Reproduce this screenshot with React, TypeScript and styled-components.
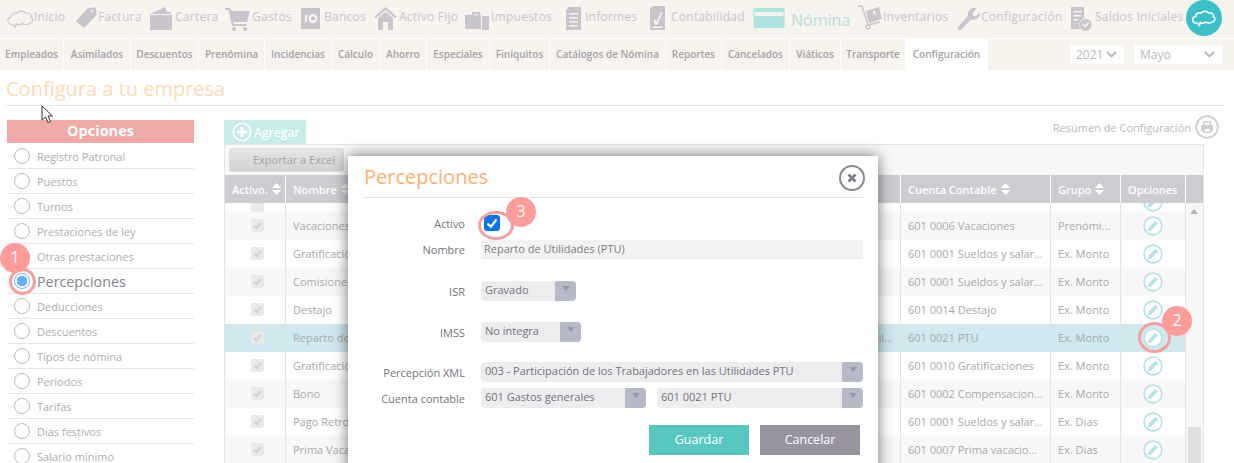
import React from "react";
import styled, { createGlobalStyle } from "styled-components";

const GlobalStyle = createGlobalStyle`
  html, body { margin: 0; padding: 0; background: #fff; }
  body { font-family: "Open Sans", "Liberation Sans", sans-serif; }
  * { box-sizing: border-box; }
`;

const Page = styled.div`
  position: relative;
  width: 1234px;
  height: 463px;
  overflow: hidden;
  background: #fff;
`;

/* top menu */
const TopBar = styled.header`
  display: flex;
  height: 38px;
  padding-left: 7px;
  background: #f7f3ed;
`;
const NavItem = styled.div<{ $w: number; $active?: boolean }>`
  display: flex;
  align-items: center;
  flex: 0 0 ${(p) => p.$w}px;
  height: 38px;
  white-space: nowrap;
  color: ${(p) => (p.$active ? "#aee4df" : "#c8c5cc")};
  font-size: ${(p) => (p.$active ? "16px" : "12px")};
  padding-top: ${(p) => (p.$active ? "2px" : "0")};
  letter-spacing: ${(p) => (p.$active ? "0" : "0.25px")};
  span { margin-top: ${(p) => (p.$active ? "0" : "-6px")}; }
`;
const NavIcon = styled.svg<{ $slot: number }>`
  flex: 0 0 auto;
  width: ${(p) => p.$slot}px;
  height: 26px;
  fill: currentColor;
  margin-top: -2px;
`;
const CloudButton = styled.div`
  position: absolute;
  left: 1186px;
  top: 0;
  width: 36px;
  height: 36px;
  border-radius: 50%;
  background: #3bc0c7;
  display: flex;
  align-items: center;
  justify-content: center;
`;

/* second level tabs */
const SubBar = styled.nav`
  display: flex;
  align-items: stretch;
  height: 31px;
  margin-top: 1px;
  background: #f7f3ed;
`;
const Tab = styled.div<{ $w: number; $current?: boolean }>`
  flex: 0 0 ${(p) => p.$w}px;
  display: flex;
  align-items: center;
  justify-content: center;
  padding-bottom: 1px;
  font-size: 10px;
  font-weight: 600;
  white-space: nowrap;
  color: #a3a2ab;
  border-right: 1px solid #fff;
  background: ${(p) => (p.$current ? "#fff" : "transparent")};
`;
const PeriodBox = styled.div<{ $w: number; $left: number }>`
  flex: 0 0 ${(p) => p.$w}px;
  margin: 6px 0 6px ${(p) => p.$left}px;
  background: #fff;
  display: flex;
  align-items: center;
  justify-content: space-between;
  padding: 0 7px 0 6px;
  font-size: 12px;
  color: #b9b9bd;
`;

/* title */
const TitleRow = styled.div`
  height: 36px;
  margin: 0 10px 0 6px;
  border-bottom: 1px solid #e4e4e4;
  font-size: 20px;
  line-height: 38px;
  color: #fddbb3;
`;

const Content = styled.div`
  display: flex;
  padding: 14px 0 0 7px;
`;

/* left options */
const Side = styled.aside`
  flex: 0 0 187px;
  margin-right: 30px;
`;
const SideHead = styled.div`
  height: 24px;
  background: #efa9a6;
  border-bottom: 1px solid #fff;
  color: #fff;
  font-size: 14.5px;
  font-weight: 700;
  line-height: 22px;
  text-align: center;
`;
const SideRow = styled.div<{ $selected?: boolean }>`
  display: flex;
  align-items: center;
  height: 25px;
  padding-left: 7px;
  border-bottom: 1px solid #e6e6e6;
  color: ${(p) => (p.$selected ? "#84848c" : "#adadb1")};
  font-size: ${(p) => (p.$selected ? "14.3px" : "11px")};
`;
const Radio = styled.span<{ $selected?: boolean }>`
  flex: 0 0 16px;
  width: 16px;
  height: 16px;
  margin-right: 7px;
  border-radius: 50%;
  border: 1px solid ${(p) => (p.$selected ? "#6fb0f5" : "#bcbcbc")};
  background: ${(p) => (p.$selected ? "radial-gradient(circle, #6aaef8 0 5px, #fff 5.5px)" : "#fff")};
`;

/* main table */
const Main = styled.section`
  flex: 0 0 995px;
`;
const MainTop = styled.div`
  display: flex;
  justify-content: space-between;
  height: 24px;
`;
const AddTab = styled.div`
  display: flex;
  align-items: center;
  gap: 2px;
  width: 82px;
  padding-left: 8px;
  background: #c8ecea;
  color: #fff;
  font-size: 12px;
  font-weight: 600;
`;
const SummaryLink = styled.div`
  display: flex;
  align-items: center;
  gap: 4px;
  height: 26px;
  margin-top: -6px;
  color: #b9b7bd;
  font-size: 11px;
`;
const Panel = styled.div`
  width: 980px;
  border: 1px solid #e4e4e4;
  border-top: 0;
  height: 320px;
  overflow: hidden;
`;
const Toolbar = styled.div`
  height: 31px;
  padding: 3px 4px;
  background: #f8f8f8;
  border-top: 1px solid #e4e4e4;
`;
const ExportButton = styled.div`
  width: 115px;
  height: 24px;
  border: 1px solid #dcdcdc;
  border-radius: 3px;
  background: linear-gradient(#e6e6e8, #d2d2d4);
  color: #a2a2a6;
  font-size: 11px;
  line-height: 22px;
  padding-left: 23px;
`;
const COLUMNS = "61px 340px 275px 150px 70px 65px";
const HeadRow = styled.div`
  display: grid;
  grid-template-columns: ${COLUMNS} 17px;
  height: 28px;
  background: #cdccd1;
  color: #fff;
  font-size: 11px;
  font-weight: 600;
`;
const HeadCell = styled.div`
  display: flex;
  align-items: center;
  gap: 4px;
  padding-left: 7px;
  border-right: 1px solid #fff;
  white-space: nowrap;
  &:last-child { border-right: 0; }
`;
const BodyWrap = styled.div`
  position: relative;
  padding-right: 17px;
`;
const Row = styled.div<{ $tone: "white" | "grey" | "picked"; $partial?: boolean }>`
  display: grid;
  grid-template-columns: ${COLUMNS};
  height: ${(p) => (p.$partial ? "9px" : "28px")};
  overflow: hidden;
  background: ${(p) =>
    p.$tone === "picked" ? "#cfe9ef" : p.$tone === "grey" ? "#f8f8f8" : "#fff"};
  color: #a8a8aa;
  font-size: 11px;
`;
const Cell = styled.div<{ $center?: boolean; $bottom?: boolean }>`
  display: flex;
  align-items: ${(p) => (p.$bottom ? "flex-end" : "center")};
  justify-content: ${(p) => (p.$center ? "center" : "flex-start")};
  padding: 0 ${(p) => (p.$center ? "0" : "7px")} ${(p) => (p.$bottom ? "0" : "1px")};
  border-right: 1px solid #e4e4e4;
  white-space: nowrap;
  overflow: hidden;
  min-width: 0;
  span { overflow: hidden; text-overflow: ellipsis; }
`;
const MutedCheck = styled.span`
  display: flex;
  align-items: center;
  justify-content: center;
  width: 13px;
  height: 13px;
  border-radius: 2px;
  background: #e9e9e9;
  margin-left: 5px;
`;
const ScrollTrack = styled.div`
  position: absolute;
  right: 0;
  top: 0;
  bottom: 0;
  width: 17px;
  background: #f7f7f7;
`;
const ScrollArrow = styled.div`
  position: absolute;
  left: 4px;
  top: 6px;
  border: 4px solid transparent;
  border-top: 0;
  border-bottom: 5px solid #b5b5b5;
`;
const ScrollThumb = styled.div`
  position: absolute;
  left: 2px;
  top: 224px;
  width: 13px;
  height: 60px;
  background: #e0e0e0;
`;

/* modal */
const Modal = styled.div`
  position: absolute;
  left: 348px;
  top: 156px;
  width: 530px;
  height: 320px;
  background: #fff;
  padding: 0 15px;
  box-shadow: 0 0 14px rgba(0, 0, 0, 0.55);
`;
const ModalHead = styled.div`
  position: relative;
  height: 42px;
  border-bottom: 1px solid #e4e4e4;
  color: #fdb26c;
  font-size: 20px;
  line-height: 42px;
  padding-left: 1px;
`;
const CloseButton = styled.div`
  position: absolute;
  right: -2px;
  top: 9px;
  width: 26px;
  height: 26px;
  border-radius: 50%;
  border: 2px solid #8b8a94;
  display: flex;
  align-items: center;
  justify-content: center;
`;
const FormRow = styled.div<{ $top: number; $h?: number }>`
  display: flex;
  align-items: center;
  height: ${(p) => p.$h ?? 20}px;
  margin-top: ${(p) => p.$top}px;
`;
const Label = styled.label`
  flex: 0 0 102px;
  text-align: right;
  margin-right: 16px;
  color: #73737b;
  font-size: 11px;
  white-space: nowrap;
`;
const Check = styled.span`
  display: flex;
  align-items: center;
  justify-content: center;
  width: 16px;
  height: 16px;
  margin-left: 3px;
  border-radius: 3px;
  background: #0a75f0;
`;
const TextField = styled.div`
  flex: 1;
  height: 19px;
  background: #f3f3f3;
  border-bottom: 1px solid #ebebeb;
  padding-left: 3px;
  color: #7c7c82;
  font-size: 11px;
  line-height: 18px;
`;
const Select = styled.div<{ $w: number; $left?: number }>`
  position: relative;
  flex: 0 0 ${(p) => p.$w}px;
  margin-left: ${(p) => p.$left ?? 0}px;
  height: 20px;
  border-radius: 4px;
  overflow: hidden;
  background: #ededf0;
  color: #737379;
  font-size: 11px;
  line-height: 18px;
  padding-left: 4px;
  white-space: nowrap;
  &::after {
    content: "";
    position: absolute;
    right: 0;
    top: 0;
    width: 21px;
    height: 100%;
    background: #b5bac6;
  }
  &::before {
    content: "";
    position: absolute;
    z-index: 1;
    right: 6px;
    top: 5px;
    border: 4px solid transparent;
    border-bottom: 0;
    border-top: 5px solid #9499a6;
  }
`;
const Actions = styled.div`
  display: flex;
  justify-content: flex-end;
  gap: 11px;
  margin-top: 17px;
  padding-right: 3px;
`;
const Button = styled.div<{ $kind: "save" | "cancel" }>`
  width: 100px;
  height: 30px;
  background: ${(p) => (p.$kind === "save" ? "#58c7c1" : "#97949f")};
  color: #fff;
  font-size: 12.5px;
  line-height: 30px;
  text-align: center;
`;

/* tutorial marks */
const Badge = styled.div<{ $x: number; $y: number }>`
  position: absolute;
  left: ${(p) => p.$x}px;
  top: ${(p) => p.$y}px;
  width: 30px;
  height: 30px;
  border-radius: 50%;
  background: #fe9c9b;
  color: #fff;
  font-size: 16px;
  line-height: 29px;
  text-align: center;
`;
const Ring = styled.div<{ $x: number; $y: number; $w: number; $h: number }>`
  position: absolute;
  left: ${(p) => p.$x}px;
  top: ${(p) => p.$y}px;
  width: ${(p) => p.$w}px;
  height: ${(p) => p.$h}px;
  border-radius: 50%;
  border: 3px solid #f79f9e;
`;
const Pointer = styled.svg`
  position: absolute;
  left: 41px;
  top: 105px;
  width: 13px;
  height: 19px;
`;

const TinyTick = ({ size = 9, color = "#fff" }: { size?: number; color?: string }) => (
  <svg width={size} height={size} viewBox="0 0 12 12">
    <path d="M1.5 6.5 L4.8 9.8 L10.5 2.5" fill="none" stroke={color} strokeWidth="2.2" />
  </svg>
);

const Sorter = ({ dim }: { dim?: boolean }) => (
  <svg width="9" height="12" viewBox="0 0 9 12" fill="#fff" opacity={dim ? 0.7 : 1}>
    <path d="M4.5 0 L9 5 H0 Z M4.5 12 L0 7 H9 Z" />
  </svg>
);

const Chevron = () => (
  <svg width="11" height="7" viewBox="0 0 11 7">
    <path d="M1 1 L5.5 5.5 L10 1" fill="none" stroke="#b4b4b8" strokeWidth="1.8" />
  </svg>
);

const CLOUD =
  "M7 20 C3 20 1 17.5 1 15 C1 12.5 3 11 5 11 C5 7 9 5 12 6.5 C14 3 20 3 22 6.5 C26 5 30 8 28.5 11 C31 12 31.5 17 28 18 C25 20 21 20 18 18.5 C15 20.5 12 20 11 19 L10 23 L7 20 Z";

const PencilBadge = () => (
  <svg width="20" height="20" viewBox="0 0 20 20">
    <circle cx="10" cy="10" r="8.9" fill="#fff" stroke="#b7e3ea" strokeWidth="1.8" />
    <path d="M4.5 15.5 L5.3 12 L12.6 4.8 L15.2 7.4 L8 14.7 Z" fill="#b7e3ea" />
  </svg>
);

type NavEntry = { label: string; w: number; slot: number; box: string; icon: React.ReactNode; active?: boolean };

const NAV: NavEntry[] = [
  {
    label: "Inicio", w: 67, slot: 27, box: "0 0 32 26",
    icon: <path d={CLOUD} transform="translate(0 1)" fill="none" stroke="currentColor" strokeWidth="1.3" />,
  },
  {
    label: "Factura", w: 75, slot: 24, box: "0 0 24 26",
    icon: <path fillRule="evenodd" d="M2 16 L14 3 L22 2.5 L22.5 10 L10 23 Z M18 5 a1.2 1.2 0 1 0 .1 0 Z" />,
  },
  {
    label: "Cartera", w: 76, slot: 26, box: "0 0 26 26",
    icon: <path d="M1 9 L16 2 L18 7 L22 7 L22 9 Z M1 10 H23 V25 H1 Z" />,
  },
  {
    label: "Gastos", w: 75, slot: 27, box: "0 0 27 26",
    icon: <path d="M0 3 H5 L7 6 H25 L22 17 H8.5 L9 19 H22 V21 H7 L3.5 5 H0 Z M9 22 a2 2 0 1 0 .1 0 Z M20 22 a2 2 0 1 0 .1 0 Z" />,
  },
  {
    label: "Bancos", w: 74, slot: 24, box: "0 0 24 26",
    icon: (
      <path fillRule="evenodd" d="M1 3 H20 V24 H1 Z M13 9 a4.5 4.5 0 1 0 .1 0 Z M13 11.5 a2 2 0 1 1 -.1 0 Z M5 10 H7 V17 H5 Z" />
    ),
  },
  {
    label: "Activo Fijo", w: 91, slot: 25, box: "0 0 25 26",
    icon: <path d="M11.5 2 L23 12 L21 13 L11.5 5 L2 13 L0 12 Z M4 13 L11.5 7 L19 13 V25 H14 V17 H9 V25 H4 Z" />,
  },
  {
    label: "Impuestos", w: 98, slot: 26, box: "0 0 26 26",
    icon: (
      <path fillRule="evenodd" d="M0 10 H7 V7 H15 V10 H16 V24 H0 Z M9 9 H13 V10 H9 Z M17 11 H24 V25 H17 Z" />
    ),
  },
  {
    label: "Informes", w: 86, slot: 22, box: "0 0 22 26",
    icon: (
      <path fillRule="evenodd" d="M3 5 L6 2 H18 V25 H3 Z M6 8 V9.5 H15 V8 Z M6 12 V13.5 H15 V12 Z M6 16 V17.5 H15 V16 Z M6 20 V21.5 H15 V20 Z" />
    ),
  },
  {
    label: "Contabilidad", w: 104, slot: 22, box: "0 0 22 26",
    icon: (
      <path fillRule="evenodd" d="M1 3 L4 1 H16 V25 H1 Z M4 15 L6 14 L7.5 17 L12 7 L13.5 8 L8 20 H6.5 Z M4 21.5 V23 H13 V21.5 Z" />
    ),
  },
  {
    label: "Nómina", w: 104, slot: 38, box: "0 0 38 26",
    active: true,
    icon: <path fillRule="evenodd" d="M2 2 H30 a1.5 1.5 0 0 1 1.5 1.5 V20.5 a1.5 1.5 0 0 1 -1.5 1.5 H2 a1.5 1.5 0 0 1 -1.5 -1.5 V3.5 A1.5 1.5 0 0 1 2 2 Z M1.5 6 V10 H30.5 V6 Z" />,
  },
  {
    label: "Inventarios", w: 100, slot: 26, box: "0 0 26 26",
    icon: (
      <>
        <path fillRule="evenodd" d="M9 6 L22 2 L25 14 L12 18 Z M16 6 L18 5.5 L18.8 9.5 L16.8 10 Z" />
        <path d="M1 1 L5 1 L11 20 L23 17" fill="none" stroke="currentColor" strokeWidth="1.5" />
        <circle cx="11" cy="22" r="2" fill="none" stroke="currentColor" strokeWidth="1.4" />
      </>
    ),
  },
  {
    label: "Configuración", w: 113, slot: 24, box: "0 0 24 26",
    icon: <path d="M1 22 L11 11 C10 6 14 2 20 3 L15.5 7.5 L16 10.5 L19 11 L23 7 C24 12 19 16 14 14.5 L4 25 C2.5 26 0 24 1 22 Z" />,
  },
  {
    label: "Saldos Iniciales", w: 116, slot: 25, box: "0 0 25 26",
    icon: (
      <>
        <path fillRule="evenodd" d="M1 2 H14 V13 a7.5 7.5 0 0 0 -4 11 H1 Z M3.5 6 V7.5 H12 V6 Z M3.5 10 V11.5 H11 V10 Z M3.5 14 V15.5 H8.5 V14 Z" />
        <path fillRule="evenodd" d="M15.5 14 a6 6 0 1 0 .1 0 Z M12.5 20 L14 18.8 L15 20.5 L18 16.8 L19.5 18 L15 23 Z" />
      </>
    ),
  },
];

const TABS: [string, number][] = [
  ["Empleados", 64],
  ["Asimilados", 67],
  ["Descuentos", 68],
  ["Prenómina", 66],
  ["Incidencias", 67],
  ["Cálculo", 48],
  ["Ahorro", 47],
  ["Especiales", 63],
  ["Finiquitos", 60],
  ["Catálogos de Nómina", 116],
  ["Reportes", 56],
  ["Cancelados", 68],
  ["Viáticos", 51],
  ["Transporte", 65],
];

const OPTIONS = [
  "Registro Patronal",
  "Puestos",
  "Turnos",
  "Prestaciones de ley",
  "Otras prestaciones",
  "Percepciones",
  "Deducciones",
  "Descuentos",
  "Tipos de nómina",
  "Periodos",
  "Tarifas",
  "Dias festivos",
  "Salario minimo",
];

type Line = { name: string; clave?: string; account: string; group: string; tone: "white" | "grey" | "picked" };

const LINES: Line[] = [
  { name: "Vacaciones", account: "601 0006 Vacaciones", group: "Prenómi...", tone: "grey" },
  { name: "Gratificación Anual", account: "601 0001 Sueldos y salar...", group: "Ex. Monto", tone: "white" },
  { name: "Comisiones", account: "601 0001 Sueldos y salar...", group: "Ex. Monto", tone: "grey" },
  { name: "Destajo", account: "601 0014 Destajo", group: "Ex. Monto", tone: "white" },
  {
    name: "Reparto de Utilidades (PTU)",
    clave: "003 - Participación de los Trabajadores en las Utilidades PTU",
    account: "601 0021 PTU",
    group: "Ex. Monto",
    tone: "picked",
  },
  { name: "Gratificación", account: "601 0010 Gratificaciones", group: "Ex. Monto", tone: "white" },
  { name: "Bono", account: "601 0002 Compensacion...", group: "Ex. Monto", tone: "grey" },
  { name: "Pago Retroactivo", account: "601 0001 Sueldos y salar...", group: "Ex. Dias", tone: "white" },
  { name: "Prima Vacacional", account: "601 0007 Prima vacacio...", group: "Ex. Dias", tone: "grey" },
];

export default function App() {
  return (
    <Page>
      <GlobalStyle />
      <TopBar>
        {NAV.map((item) => (
          <NavItem key={item.label} $w={item.w} $active={item.active}>
            <NavIcon $slot={item.slot} viewBox={item.box} preserveAspectRatio="xMinYMid meet">
              {item.icon}
            </NavIcon>
            <span>{item.label}</span>
          </NavItem>
        ))}
      </TopBar>
      <CloudButton>
        <svg width="24" height="20" viewBox="0 0 32 26">
          <path d={CLOUD} fill="none" stroke="#fff" strokeWidth="2" />
        </svg>
      </CloudButton>

      <SubBar>
        {TABS.map(([label, w]) => (
          <Tab key={label} $w={w}>
            {label}
          </Tab>
        ))}
        <Tab $w={82} $current>
          Configuración
        </Tab>
        <PeriodBox $w={54} $left={82}>
          2021 <Chevron />
        </PeriodBox>
        <PeriodBox $w={88} $left={10}>
          Mayo <Chevron />
        </PeriodBox>
      </SubBar>

      <TitleRow>Configura a tu empresa</TitleRow>

      <Content>
        <Side>
          <SideHead>Opciones</SideHead>
          {OPTIONS.map((opt) => (
            <SideRow key={opt} $selected={opt === "Percepciones"}>
              <Radio $selected={opt === "Percepciones"} />
              {opt}
            </SideRow>
          ))}
        </Side>

        <Main>
          <MainTop>
            <AddTab>
              <svg width="20" height="20" viewBox="0 0 20 20">
                <circle cx="10" cy="10" r="8.6" fill="none" stroke="#fff" strokeWidth="1.8" />
                <path d="M10 5 V15 M5 10 H15" stroke="#fff" strokeWidth="3" />
              </svg>
              Agregar
            </AddTab>
            <SummaryLink>
              Resúmen de Configuración
              <svg width="24" height="24" viewBox="0 0 24 24">
                <circle cx="12" cy="12" r="10.8" fill="none" stroke="#cfcfd3" strokeWidth="1.8" />
                <path
                  fillRule="evenodd"
                  d="M8 6 H16 V10 H18 V16 H16 V18 H8 V16 H6 V10 H8 Z M9.5 7.5 V10 H14.5 V7.5 Z M9.5 14 V16.5 H14.5 V14 Z"
                  fill="#cfcfd3"
                />
              </svg>
            </SummaryLink>
          </MainTop>
          <Panel>
            <Toolbar>
              <ExportButton>Exportar a Excel</ExportButton>
            </Toolbar>
            <HeadRow>
              <HeadCell>
                Activo.
                <Sorter />
              </HeadCell>
              <HeadCell>
                Nombre
                <Sorter dim />
              </HeadCell>
              <HeadCell>Percepción XML</HeadCell>
              <HeadCell>
                Cuenta Contable
                <Sorter />
              </HeadCell>
              <HeadCell>
                Grupo
                <Sorter />
              </HeadCell>
              <HeadCell>Opciones</HeadCell>
              <HeadCell />
            </HeadRow>
            <BodyWrap>
              <Row $tone="white" $partial>
                <Cell $center $bottom>
                  <MutedCheck />
                </Cell>
                <Cell />
                <Cell />
                <Cell />
                <Cell />
                <Cell $center $bottom>
                  <PencilBadge />
                </Cell>
              </Row>
              {LINES.map((line) => (
                <Row key={line.name} $tone={line.tone}>
                  <Cell $center>
                    <MutedCheck>
                      <TinyTick color="#cfcfcf" />
                    </MutedCheck>
                  </Cell>
                  <Cell>
                    <span>{line.name}</span>
                  </Cell>
                  <Cell>
                    <span>{line.clave}</span>
                  </Cell>
                  <Cell>
                    <span>{line.account}</span>
                  </Cell>
                  <Cell>
                    <span>{line.group}</span>
                  </Cell>
                  <Cell $center>
                    <PencilBadge />
                  </Cell>
                </Row>
              ))}
              <ScrollTrack>
                <ScrollArrow />
                <ScrollThumb />
              </ScrollTrack>
            </BodyWrap>
          </Panel>
        </Main>
      </Content>

      <Modal>
        <ModalHead>
          Percepciones
          <CloseButton>
            <svg width="12" height="12" viewBox="0 0 12 12">
              <path d="M2.5 2.5 L9.5 9.5 M9.5 2.5 L2.5 9.5" stroke="#7f7e88" strokeWidth="2.6" />
            </svg>
          </CloseButton>
        </ModalHead>
        <FormRow $top={16} $h={18}>
          <Label>Activo</Label>
          <Check>
            <TinyTick size={12} />
          </Check>
        </FormRow>
        <FormRow $top={7}>
          <Label>Nombre</Label>
          <TextField>Reparto de Utilidades (PTU)</TextField>
        </FormRow>
        <FormRow $top={22}>
          <Label>ISR</Label>
          <Select $w={95}>Gravado</Select>
        </FormRow>
        <FormRow $top={21}>
          <Label>IMSS</Label>
          <Select $w={100}>No integra</Select>
        </FormRow>
        <FormRow $top={20}>
          <Label>Percepción XML</Label>
          <Select $w={382}>003 - Participación de los Trabajadores en las Utilidades PTU</Select>
        </FormRow>
        <FormRow $top={6}>
          <Label>Cuenta contable</Label>
          <Select $w={165}>601 Gastos generales</Select>
          <Select $w={206} $left={11}>
            601 0021 PTU
          </Select>
        </FormRow>
        <Actions>
          <Button $kind="save">Guardar</Button>
          <Button $kind="cancel">Cancelar</Button>
        </Actions>
      </Modal>

      <Ring $x={9} $y={268} $w={27} $h={27} />
      <Badge $x={0} $y={243}>1</Badge>
      <Ring $x={1138} $y={322} $w={33} $h={31} />
      <Badge $x={1162} $y={306}>2</Badge>
      <Ring $x={478} $y={211} $w={36} $h={29} />
      <Badge $x={506} $y={197}>3</Badge>

      <Pointer viewBox="0 0 13 19">
        <path d="M1 1 V15 L4.5 12 L7 17.5 L9.5 16.5 L7 11 H11.5 Z" fill="#fff" stroke="#333" strokeWidth="1" />
      </Pointer>
    </Page>
  );
}
